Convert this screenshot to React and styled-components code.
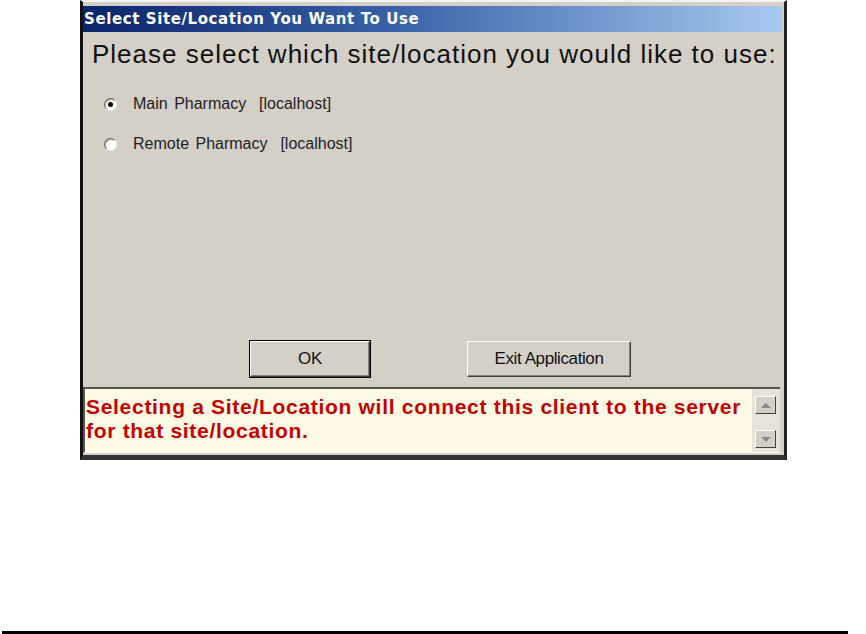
import React from 'react';
import styled, { createGlobalStyle } from 'styled-components';

const Global = createGlobalStyle`
  html, body {
    margin: 0;
    padding: 0;
    background: #ffffff;
  }
  body {
    width: 866px;
    height: 634px;
    overflow: hidden;
    font-family: "Liberation Sans", Arial, sans-serif;
  }
`;

const Page = styled.div`
  width: 866px;
  height: 634px;
  display: flex;
  flex-direction: column;
  justify-content: space-between;
`;

const Window = styled.div`
  margin-left: 80px;
  width: 707px;
  height: 460px;
  box-sizing: border-box;
  background: #d4d0c8;
  border-top: 2px solid #f4f4f4;
  border-left: 3px solid #111;
  border-right: 3px solid #222;
  border-bottom: 5px solid #333;
  padding: 4px 2px 2px 0;
  display: flex;
  flex-direction: column;
`;

const TitleBar = styled.div`
  height: 26px;
  background: linear-gradient(to right, #0a246a 0%, #3a62a8 45%, #a6caf0 100%);
  color: #fff;
  font-family: "DejaVu Sans", Verdana, sans-serif;
  font-weight: bold;
  font-size: 15px;
  line-height: 26px;
  padding-left: 1px;
  letter-spacing: 0.6px;
  white-space: nowrap;
`;

const Heading = styled.div`
  font-size: 26px;
  letter-spacing: 1px;
  color: #111;
  padding: 8px 0 0 9px;
  line-height: 28px;
  white-space: nowrap;
`;

const Options = styled.div`
  display: flex;
  flex-direction: column;
  gap: 22px;
  padding: 27px 0 0 21px;
`;

const Option = styled.label`
  display: flex;
  align-items: center;
  gap: 16px;
  font-size: 16px;
  color: #222;
  white-space: nowrap;
  word-spacing: 2px;
`;

const Radio = styled.span`
  width: 13px;
  height: 13px;
  border-radius: 50%;
  box-sizing: border-box;
  background: #fff;
  border: 1px solid #666;
  border-right-color: #eee;
  border-bottom-color: #eee;
  box-shadow: inset 1px 1px 0 #aaa;
  display: flex;
  align-items: center;
  justify-content: center;
  &::after {
    content: '';
    width: 5px;
    height: 5px;
    border-radius: 50%;
    background: ${p => (p.checked ? '#000' : 'transparent')};
  }
`;

const Spacer = styled.div`
  flex: 1;
`;

const ButtonRow = styled.div`
  display: flex;
  gap: 97px;
  padding-left: 167px;
  margin-bottom: 10px;
`;

const Button = styled.button`
  height: 36px;
  width: ${p => p.w}px;
  box-sizing: border-box;
  background: #d4d0c8;
  font-family: "Liberation Sans", Arial, sans-serif;
  font-size: 17px;
  color: #111;
  border: 1px solid;
  border-color: #fff #404040 #404040 #fff;
  box-shadow: inset -1px -1px 0 #808080;
  outline: ${p => (p.primary ? '1px solid #000' : 'none')};
  letter-spacing: -0.4px;
  padding: 0;
`;

const InfoBox = styled.div`
  height: 63px;
  display: flex;
  border-top: 2px solid #555;
  border-left: 2px solid #555;
  border-bottom: 1px solid #fff;
  margin-right: 2px;
`;

const InfoText = styled.div`
  flex: 1;
  background: #fffbe4;
  color: #c40000;
  font-weight: bold;
  font-size: 21px;
  letter-spacing: 0.7px;
  line-height: 24px;
  padding: 6px 0 0 1px;
  white-space: nowrap;
`;

const Scrollbar = styled.div`
  width: 28px;
  background: #e6e3da;
  display: flex;
  flex-direction: column;
  justify-content: space-between;
  padding: 7px 0 4px 3px;
  box-sizing: border-box;
`;

const ScrollButton = styled.div`
  width: 21px;
  height: 18px;
  box-sizing: border-box;
  background: #d4d0c8;
  border: 1px solid;
  border-color: #fff #404040 #404040 #fff;
  display: flex;
  align-items: center;
  justify-content: center;
  &::after {
    content: '';
    border-left: 5px solid transparent;
    border-right: 5px solid transparent;
    ${p => (p.up ? 'border-bottom: 5px solid #888;' : 'border-top: 5px solid #888;')}
  }
`;

const Rule = styled.div`
  height: 3px;
  margin: 0 18px 0 2px;
  background: #000;
`;

export default function App() {
  return (
    <Page>
      <Global />
      <Window>
        <TitleBar>Select Site/Location You Want To Use</TitleBar>
        <Heading>Please select which site/location you would like to use:</Heading>
        <Options>
          <Option>
            <Radio checked />
            Main Pharmacy&nbsp; [localhost]
          </Option>
          <Option>
            <Radio />
            Remote Pharmacy&nbsp; [localhost]
          </Option>
        </Options>
        <Spacer />
        <ButtonRow>
          <Button primary w={120}>OK</Button>
          <Button w={164}>Exit Application</Button>
        </ButtonRow>
        <InfoBox>
          <InfoText>
            Selecting a Site/Location will connect this client to the server
            <br />
            for that site/location.
          </InfoText>
          <Scrollbar>
            <ScrollButton up />
            <ScrollButton />
          </Scrollbar>
        </InfoBox>
      </Window>
      <Rule />
    </Page>
  );
}
